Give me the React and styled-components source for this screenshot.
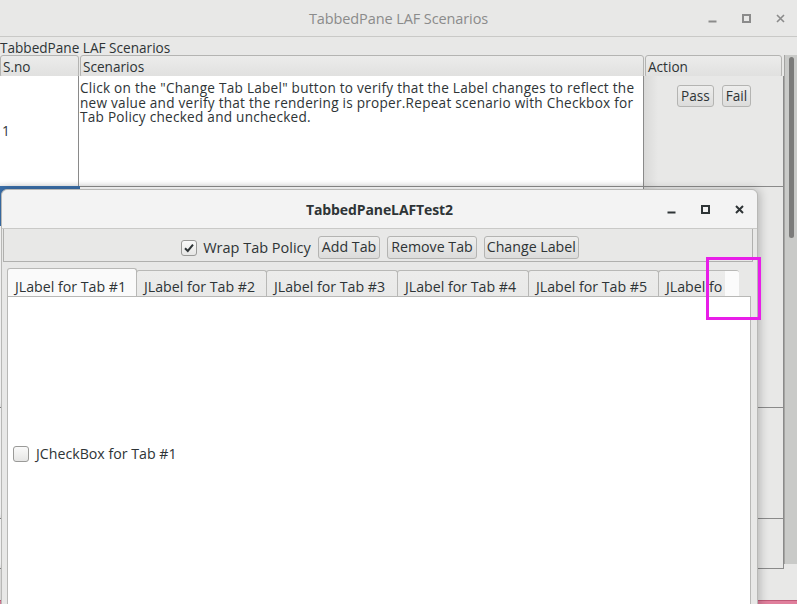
import React from "react";
import styled, { createGlobalStyle } from "styled-components";

const Global = createGlobalStyle`
  html, body { margin: 0; padding: 0; }
  body {
    width: 797px;
    height: 604px;
    overflow: hidden;
    background: #e8e8e7;
    font-family: "Open Sans", "DejaVu Sans", sans-serif;
  }
`;

const Desktop = styled.div`
  position: relative;
  width: 797px;
  height: 604px;
  overflow: hidden;
`;

const MainWindow = styled.div`
  display: flex;
  flex-direction: column;
  width: 797px;
  height: 604px;
  background: #e8e8e7;
`;

const TitleBar = styled.div`
  position: relative;
  height: ${(p) => (p.$active ? 38 : 36)}px;
  flex: none;
  display: flex;
  align-items: center;
  justify-content: center;
  border-bottom: 1px solid #c9c9c7;
  background: ${(p) => (p.$active ? "#f3f3f3" : "#e8e8e7")};
  border-radius: ${(p) => (p.$active ? "6px 6px 0 0" : "0")};
`;

const Title = styled.span`
  font-size: ${(p) => (p.$bold ? 14 : 14.5)}px;
  font-weight: ${(p) => (p.$bold ? 700 : 400)};
  color: ${(p) => (p.$bold ? "#2e3436" : "#8b8b8b")};
  letter-spacing: -0.1px;
  margin-top: ${(p) => (p.$bold ? 1 : 0)}px;
`;

const Controls = styled.div`
  position: absolute;
  right: ${(p) => p.$right}px;
  top: 0;
  bottom: 0;
  display: flex;
  align-items: center;
  gap: ${(p) => p.$gap}px;
`;

const Caption = styled.div`
  height: 18px;
  line-height: 21px;
  font-size: 13.6px;
  color: #2e3436;
`;

const TableArea = styled.div`
  display: flex;
  height: 509px;
  flex: none;
`;

const Table = styled.div`
  width: 785px;
  display: flex;
  flex-direction: column;
`;

const HeaderRow = styled.div`
  display: grid;
  grid-template-columns: 80px 565px 138px;
  height: 21px;
  flex: none;
`;

const HeaderCell = styled.div`
  margin-right: 1px;
  border: 1px solid #b4b4b2;
  border-radius: 3px;
  background: linear-gradient(#ececeb, #e0e0df);
  font-size: 13.6px;
  line-height: 21px;
  padding-left: 2px;
  color: #2e3436;
`;

const Row = styled.div`
  display: grid;
  grid-template-columns: 79px 565px 139px;
  height: ${(p) => p.$h}px;
  flex: none;
  border-bottom: 1px solid #8a8a8a;
  border-right: 1px solid #8a8a8a;
`;

const Cell = styled.div`
  border-right: 1px solid #8a8a8a;
  background: ${(p) => (p.$white ? "#ffffff" : "linear-gradient(90deg, #d9d9d8, #e8e8e7 14px)")};
  box-shadow: ${(p) => (p.$white ? "inset 0 -6px 5px -5px #e0e0e0" : "none")};
  font-size: 13.6px;
  line-height: 14.6px;
  letter-spacing: ${(p) => (p.$text ? "0.25px" : "0")};
  color: #2e3436;
  display: flex;
  align-items: ${(p) => p.$align || "flex-start"};
  padding: ${(p) => p.$pad || "4px 2px"};
  &:last-child {
    border-right: none;
  }
`;

const SmallButton = styled.button`
  font-family: inherit;
  font-size: ${(p) => p.$size || 13.6}px;
  color: #2e3436;
  height: ${(p) => p.$h || 22}px;
  padding: 0 ${(p) => p.$px || 3}px;
  border: 1px solid #b4b4b2;
  border-radius: 3px;
  background: linear-gradient(#eeeeed, #dcdcdb);
  line-height: 1;
  margin: 0;
`;

const ButtonPair = styled.div`
  display: flex;
  gap: 8px;
  margin: 9px 0 0 33px;
`;

const Scrollbar = styled.div`
  width: 12px;
  background: #c9cac8;
  position: relative;
  border-left: 1px solid #a4a4a2;
`;

const Thumb = styled.div`
  position: absolute;
  left: 4px;
  top: 2px;
  width: 5px;
  height: 181px;
  border-radius: 3px;
  background: #7b7b7a;
`;

const BottomStrip = styled.div`
  margin-top: auto;
  height: 3px;
  background: #e07f9c;
  border-top: 1px solid #c05a78;
`;

const SelectedCell = styled.div`
  position: absolute;
  left: 0;
  top: 186px;
  width: 80px;
  height: 40px;
  background: #3a6ea8;
`;

const Dialog = styled.div`
  position: absolute;
  left: 1px;
  top: 189px;
  width: 755px;
  height: 430px;
  background: #e8e8e7;
  border: 1px solid #b8b8b6;
  border-radius: 6px 6px 0 0;
  box-shadow: 2px 0 10px rgba(0, 0, 0, 0.22);
  display: flex;
  flex-direction: column;
`;

const Body = styled.div`
  flex: 1;
  display: flex;
  flex-direction: column;
  padding: 0 4px 0 1px;
`;

const Toolbar = styled.div`
  height: 33px;
  flex: none;
  box-sizing: border-box;
  display: flex;
  align-items: center;
  justify-content: center;
  gap: 7px;
  border: 1px solid #b0b0ae;
  border-top: none;
  padding: 5px 0 0 4px;
`;

const CheckLabel = styled.label`
  display: flex;
  align-items: center;
  gap: 6px;
  font-size: 14.5px;
  color: #2e3436;
`;

const Box = styled.span`
  width: 14px;
  height: 14px;
  border: 1px solid #9a9a98;
  border-radius: 3px;
  background: linear-gradient(#fafafa, #e6e6e5);
  display: inline-flex;
  align-items: center;
  justify-content: center;
`;

const TabStrip = styled.div`
  display: flex;
  margin: 6px 0 0 4px;
  height: 28px;
  flex: none;
  width: 740px;
  overflow: hidden;
`;

const Tab = styled.div`
  width: ${(p) => p.$w}px;
  flex: none;
  box-sizing: border-box;
  border: 1px solid #b8b8b6;
  border-bottom: none;
  border-right: ${(p) => (p.$last ? "none" : "1px solid #b8b8b6")};
  margin-right: -1px;
  border-radius: 3px 3px 0 0;
  background: ${(p) => (p.$selected ? "#fafafa" : "linear-gradient(#ececeb, #e9e9e8)")};
  margin-top: ${(p) => (p.$selected ? 0 : 2)}px;
  font-size: 14.2px;
  color: #2e3436;
  display: flex;
  align-items: center;
  padding: ${(p) => (p.$selected ? 7 : 5)}px 0 0 7px;
  white-space: nowrap;
  overflow: hidden;
  position: relative;
`;

const TabMask = styled.div`
  position: absolute;
  left: 66px;
  top: 0;
  width: 15px;
  height: 30px;
  background: #fbfbfb;
`;

const TabContent = styled.div`
  flex: 1;
  margin-left: 4px;
  width: 744px;
  box-sizing: border-box;
  background: #ffffff;
  border: 1px solid #b8b8b6;
  display: flex;
  align-items: flex-start;
  padding: 147px 0 0 5px;
`;

const PlainCheck = styled.label`
  display: flex;
  align-items: center;
  gap: 7px;
  font-size: 14.2px;
  color: #2e3436;
`;

const Annotation = styled.div`
  position: absolute;
  left: 706px;
  top: 257px;
  width: 49px;
  height: 57px;
  border: 3px solid #e81ee8;
`;

const Minimize = ({ c }) => (
  <svg width="9" height="9" viewBox="0 0 9 9">
    <rect x="0.5" y="6.5" width="8" height="2" fill={c} />
  </svg>
);

const Maximize = ({ c }) => (
  <svg width="9" height="9" viewBox="0 0 9 9">
    <rect x="1" y="1" width="7" height="7" fill="none" stroke={c} strokeWidth="2" />
  </svg>
);

const Close = ({ c, w = 2 }) => (
  <svg width="9" height="9" viewBox="0 0 9 9">
    <path d="M1 1 L8 8 M8 1 L1 8" stroke={c} strokeWidth={w} />
  </svg>
);

const tabs = [
  { label: "JLabel for Tab #1", w: 130 },
  { label: "JLabel for Tab #2", w: 131 },
  { label: "JLabel for Tab #3", w: 132 },
  { label: "JLabel for Tab #4", w: 132 },
  { label: "JLabel for Tab #5", w: 131 },
  { label: "JLabel fo", w: 81 },
];

export default function App() {
  return (
    <Desktop>
      <Global />
      <MainWindow>
        <TitleBar>
          <Title>TabbedPane LAF Scenarios</Title>
          <Controls $right={12} $gap={25}>
            <Minimize c="#8b8b8b" />
            <Maximize c="#8b8b8b" />
            <Close c="#8b8b8b" w={1.6} />
          </Controls>
        </TitleBar>
        <Caption>TabbedPane LAF Scenarios</Caption>
        <TableArea>
          <Table>
            <HeaderRow>
              <HeaderCell>S.no</HeaderCell>
              <HeaderCell>Scenarios</HeaderCell>
              <HeaderCell>Action</HeaderCell>
            </HeaderRow>
            <Row $h={110}>
              <Cell $white $align="center" $pad="0 2px">1</Cell>
              <Cell $white $text $pad="5px 1px 0">
                Click on the "Change Tab Label" button to verify that the Label changes to reflect the
                new value and verify that the rendering is proper.Repeat scenario with Checkbox for
                Tab Policy checked and unchecked.
              </Cell>
              <Cell $pad="0">
                <ButtonPair>
                  <SmallButton>Pass</SmallButton>
                  <SmallButton>Fail</SmallButton>
                </ButtonPair>
              </Cell>
            </Row>
            <Row $h={220}>
              <Cell $white />
              <Cell $white />
              <Cell />
            </Row>
            <Row $h={110}>
              <Cell $white />
              <Cell $white />
              <Cell />
            </Row>
            <Row $h={49}>
              <Cell $white />
              <Cell $white />
              <Cell />
            </Row>
          </Table>
          <Scrollbar>
            <Thumb />
          </Scrollbar>
        </TableArea>
        <BottomStrip />
      </MainWindow>

      <SelectedCell />

      <Dialog>
        <TitleBar $active>
          <Title $bold>TabbedPaneLAFTest2</Title>
          <Controls $right={13} $gap={25}>
            <Minimize c="#2e3436" />
            <Maximize c="#2e3436" />
            <Close c="#2e3436" />
          </Controls>
        </TitleBar>
        <Body>
          <Toolbar>
            <CheckLabel>
              <Box>
                <svg width="12" height="12" viewBox="0 0 12 12">
                  <path d="M2 6.2 L4.8 9 L10 2.6" fill="none" stroke="#2e3436" strokeWidth="2" />
                </svg>
              </Box>
              Wrap Tab Policy
            </CheckLabel>
            <SmallButton $size={14.2} $h={23} $px={3}>Add Tab</SmallButton>
            <SmallButton $size={14.2} $h={23} $px={3}>Remove Tab</SmallButton>
            <SmallButton $size={14.2} $h={23} $px={2}>Change Label</SmallButton>
          </Toolbar>
          <TabStrip>
            {tabs.map((t, i) => (
              <Tab key={t.label} $w={t.w} $selected={i === 0} $last={i === tabs.length - 1}>
                {t.label}
                {i === tabs.length - 1 && <TabMask />}
              </Tab>
            ))}
          </TabStrip>
          <TabContent>
            <PlainCheck>
              <Box />
              JCheckBox for Tab #1
            </PlainCheck>
          </TabContent>
        </Body>
      </Dialog>

      <Annotation />
    </Desktop>
  );
}
